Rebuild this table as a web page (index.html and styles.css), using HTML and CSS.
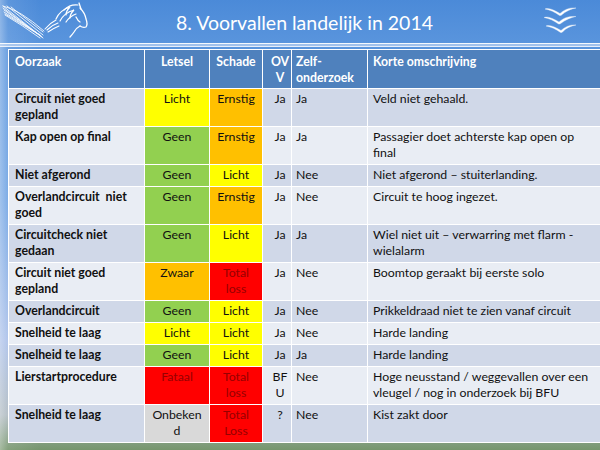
FILE: index.html
```html
<!DOCTYPE html>
<html lang="nl">
<head>
<meta charset="utf-8">
<title>8. Voorvallen landelijk in 2014</title>
<link rel="stylesheet" href="styles.css">
</head>
<body>
<header class="top">
  <div class="logo-left">
    <svg width="95" height="42" viewBox="0 0 95 42" fill="none" stroke="#fff" stroke-linecap="round">
      <g stroke-width="0.9" opacity="0.95">
        <path d="M3 5 L43 37"/>
        <path d="M3 7 L42 36"/>
        <path d="M4 9 L41 35"/>
        <path d="M4 11 L40 34"/>
        <path d="M5 13 L38 33"/>
        <path d="M7 5 L43 34"/>
        <path d="M11 6 L43 31"/>
        <path d="M3 5 Q20 9 44 30"/>
        <path d="M5 14 Q22 24 40 37"/>
      </g>
      <g stroke-width="1.1">
        <path d="M45 28 Q50 22 56 19"/>
        <path d="M47 29 Q52 24 58 22"/>
        <path d="M48 31 Q54 27 59 25"/>
      </g>
      <g stroke-width="1.2">
        <path d="M56 18 Q60 9 70 6 Q66 10 66 14"/>
        <path d="M60 20 Q64 12 74 9 Q70 13 70 17"/>
        <path d="M64 9 Q70 3 78 4"/>
        <path d="M66 21 Q70 15 76 13"/>
      </g>
      <g stroke-width="1.3">
        <path d="M79 2 L81 8"/>
        <path d="M80 7 Q85 12 86 18 Q88 23 86 26 Q83 27 80 25"/>
        <path d="M80 25 Q76 27 74 31 Q72 34 70 36"/>
        <path d="M76 16 Q78 20 80 21"/>
      </g>
    </svg>
  </div>
  <h1 class="title">8. Voorvallen landelijk in 2014</h1>
  <div class="logo-right">
    <svg width="40" height="38" viewBox="0 0 40 38">
      <g fill="#fff" stroke="#dfe8f5" stroke-width="0.4">
        <path transform="translate(4 8)" d="M0 0 C4 -1.5 9 1 15 4.5 C20 0 25 -1.5 31 -1 C26 0 21 2 16 6.5 L14.5 6.5 C10 3 5 1 0 0 Z"/>
        <path transform="translate(3 16.5)" d="M0 0 C4 -1.5 9 1 15 4.5 C20 0 25 -1.5 32 -1 C27 0 22 2 16 6.5 L14.5 6.5 C10 3 5 1 0 0 Z"/>
        <path transform="translate(5 25)" d="M0 0 C4 -1.5 9 1 15 4.5 C20 0 25 -1.5 30 -1 C25 0 20 2 16 6.5 L14.5 6.5 C10 3 5 1 0 0 Z"/>
      </g>
    </svg>
  </div>
</header>
<div class="rule"></div>
<table class="grid">
  <colgroup>
    <col class="c-oorzaak"><col class="c-letsel"><col class="c-schade"><col class="c-ov"><col class="c-zelf"><col class="c-korte">
  </colgroup>
  <thead>
    <tr>
      <th class="l">Oorzaak</th>
      <th class="c">Letsel</th>
      <th class="c">Schade</th>
      <th class="ov">OV<br>V</th>
      <th class="z">Zelf-<br>onderzoek</th>
      <th class="k">Korte omschrijving</th>
    </tr>
  </thead>
  <tbody>
    <tr class="dark">
      <td class="l b">Circuit niet goed<br>gepland</td>
      <td class="c yellow">Licht</td>
      <td class="c orange">Ernstig</td>
      <td class="ov">Ja</td>
      <td class="z">Ja</td>
      <td class="k">Veld niet gehaald.</td>
    </tr>
    <tr class="light">
      <td class="l b">Kap open op final</td>
      <td class="c green">Geen</td>
      <td class="c orange">Ernstig</td>
      <td class="ov">Ja</td>
      <td class="z">Ja</td>
      <td class="k">Passagier doet achterste kap open op<br>final</td>
    </tr>
    <tr class="dark">
      <td class="l b">Niet afgerond</td>
      <td class="c green">Geen</td>
      <td class="c yellow">Licht</td>
      <td class="ov">Ja</td>
      <td class="z">Nee</td>
      <td class="k">Niet afgerond – stuiterlanding.</td>
    </tr>
    <tr class="light">
      <td class="l b">Overlandcircuit&nbsp; niet<br>goed</td>
      <td class="c green">Geen</td>
      <td class="c orange">Ernstig</td>
      <td class="ov">Ja</td>
      <td class="z">Nee</td>
      <td class="k">Circuit te hoog ingezet.</td>
    </tr>
    <tr class="dark">
      <td class="l b">Circuitcheck niet<br>gedaan</td>
      <td class="c green">Geen</td>
      <td class="c yellow">Licht</td>
      <td class="ov">Ja</td>
      <td class="z">Ja</td>
      <td class="k">Wiel niet uit – verwarring met flarm -<br>wielalarm</td>
    </tr>
    <tr class="light">
      <td class="l b">Circuit niet goed<br>gepland</td>
      <td class="c orange">Zwaar</td>
      <td class="c red">Total<br>loss</td>
      <td class="ov">Ja</td>
      <td class="z">Nee</td>
      <td class="k">Boomtop geraakt bij eerste solo</td>
    </tr>
    <tr class="dark">
      <td class="l b">Overlandcircuit</td>
      <td class="c green">Geen</td>
      <td class="c yellow">Licht</td>
      <td class="ov">Ja</td>
      <td class="z">Nee</td>
      <td class="k">Prikkeldraad niet te zien vanaf circuit</td>
    </tr>
    <tr class="light">
      <td class="l b">Snelheid te laag</td>
      <td class="c yellow">Licht</td>
      <td class="c yellow">Licht</td>
      <td class="ov">Ja</td>
      <td class="z">Nee</td>
      <td class="k">Harde landing</td>
    </tr>
    <tr class="dark">
      <td class="l b">Snelheid te laag</td>
      <td class="c green">Geen</td>
      <td class="c yellow">Licht</td>
      <td class="ov">Ja</td>
      <td class="z">Ja</td>
      <td class="k">Harde landing</td>
    </tr>
    <tr class="light">
      <td class="l b">Lierstartprocedure</td>
      <td class="c red">Fataal</td>
      <td class="c red">Total<br>loss</td>
      <td class="ov">BF<br>U</td>
      <td class="z">Nee</td>
      <td class="k">Hoge neusstand / weggevallen over een<br>vleugel / nog in onderzoek bij BFU</td>
    </tr>
    <tr class="dark">
      <td class="l b">Snelheid te laag</td>
      <td class="c grey">Onbeken<br>d</td>
      <td class="c red">Total<br>Loss</td>
      <td class="ov">?</td>
      <td class="z">Nee</td>
      <td class="k">Kist zakt door</td>
    </tr>
  </tbody>
</table>
</body>
</html>
```
FILE: styles.css
```css
html, body {
  margin: 0;
  padding: 0;
  width: 600px;
  height: 450px;
  overflow: hidden;
}
body {
  font-family: Lato, "Open Sans", sans-serif;
  background:
    linear-gradient(to right, rgba(255,255,255,0.35) 0, rgba(255,255,255,0.1) 8px, rgba(255,255,255,0) 40px),
    linear-gradient(to bottom, #4b8ad8 0, #5a95dd 45px, #6fa3e3 200px, #a9bfe9 340px, #aeb9c0 415px, #7e9b78 445px, #76966d 450px);
}
.top {
  height: 43px;
  display: flex;
  align-items: center;
}
.logo-left {
  width: 95px;
  height: 42px;
  display: flex;
}
.title {
  flex: 1;
  margin: 0;
  text-align: center;
  color: #fff;
  font-weight: 400;
  font-size: 19.5px;
  line-height: 24px;
  padding-top: 2px;
}
.logo-right {
  width: 86px;
  height: 43px;
  padding-left: 27px;
  box-sizing: border-box;
  display: flex;
  align-items: flex-start;
  padding-top: 1px;
}
.rule {
  height: 2px;
  border-top: 1px solid rgba(255,255,255,0.9);
  border-bottom: 1px solid rgba(255,255,255,0.75);
  background: rgba(220,232,250,0.55);
  margin-bottom: 2px;
}
.grid {
  margin-left: 8px;
  width: 594px;
  table-layout: fixed;
  border-collapse: collapse;
  font-size: 12.3px;
  line-height: 16px;
  color: #111;
}
.c-oorzaak { width: 136px; }
.c-letsel { width: 65px; }
.c-schade { width: 53px; }
.c-ov { width: 29px; }
.c-zelf { width: 76px; }
.c-korte { width: 235px; }
.grid th, .grid td {
  border: 1px solid #fff;
  vertical-align: top;
  white-space: nowrap;
  overflow: hidden;
}
.grid th {
  background: #4f81bd;
  color: #fff;
  font-weight: 700;
  padding: 4px 4px 2px 6px;
  text-align: left;
}
.grid td {
  padding: 2px 4px 3px 6px;
}
.grid .c { text-align: center; padding-left: 2px; padding-right: 2px; }
.grid .ov { text-align: center; padding-left: 6px; padding-right: 0; }
.grid .z { padding-left: 4px; }
.grid .k { padding-left: 5px; }
.grid .b { font-weight: 700; }
.dark td { background: #d0d8e8; }
.light td { background: #e9edf4; }
.grid td.yellow { background: #ffff00; }
.grid td.orange { background: #ffc000; }
.grid td.green { background: #92d050; }
.grid td.red { background: #ff0000; color: #960000; }
.grid td.grey { background: #d9d9d9; }
```
